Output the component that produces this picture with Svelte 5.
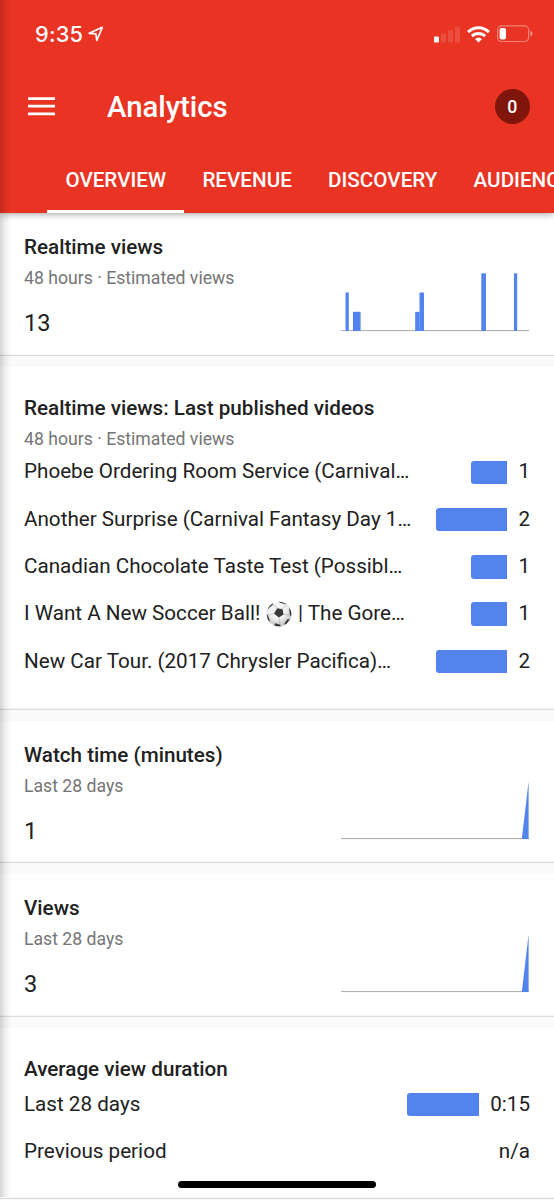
<script lang="ts">
    const tabs = ["Overview", "Revenue", "Discovery", "Audience"];
    let active = "Overview";

    const realtimeBars = [
        { x: 4.5, w: 3.3, h: 38.5 },
        { x: 12, w: 7.6, h: 19.2 },
        { x: 74.2, w: 4.5, h: 19.2 },
        { x: 78.5, w: 4.5, h: 38.5 },
        { x: 140.3, w: 4.7, h: 57.7 },
        { x: 173, w: 3.2, h: 57.7 },
    ];

    const videos = [
        { title: "Phoebe Ordering Room Service (Carnival…", views: 1 },
        { title: "Another Surprise (Carnival Fantasy Day 1…", views: 2 },
        { title: "Canadian Chocolate Taste Test (Possibl…", views: 1 },
        { title: "I Want A New Soccer Ball! ", ball: true, rest: " | The Gore…", views: 1 },
        { title: "New Car Tour. (2017 Chrysler Pacifica)…", views: 2 },
    ];

    const totals = [
        { title: "Watch time (minutes)", value: 1 },
        { title: "Views", value: 3 },
    ];
</script>

<div class="app">
    <header>
        <div class="status">
            <span class="time">9:35</span>
            <svg class="location" width="16" height="16" viewBox="0 0 16 16">
                <path d="M14.3 1.3 L1.2 7.3 L7.9 7.9 L8.8 14.5 Z" fill="none" stroke="#fff" stroke-width="1.7" stroke-linejoin="round" />
            </svg>
            <svg class="signal" width="26" height="17" viewBox="0 0 26 17">
                <rect x="0" y="10.4" width="5" height="6" rx="1.2" fill="#fff" />
                <g fill="#fff" opacity="0.13">
                    <rect x="7" y="7.4" width="5" height="9" rx="1.2" />
                    <rect x="14" y="4.2" width="5" height="12.2" rx="1.2" />
                    <rect x="21" y="0.5" width="5" height="15.9" rx="1.2" />
                </g>
            </svg>
            <svg class="wifi" width="23" height="17" viewBox="0 0 23 17">
                <g fill="none" stroke="#fff" stroke-width="3">
                    <path d="M1.1 6.1 A14.8 14.8 0 0 1 21.9 6.1" />
                    <path d="M4.9 10.1 A9.4 9.4 0 0 1 18.1 10.1" />
                </g>
                <path d="M11.5 16.5 L8 13 A5.2 5.2 0 0 1 15 13 Z" fill="#fff" />
            </svg>
            <svg class="battery" width="36" height="18" viewBox="0 0 36 18">
                <rect x="0.6" y="0.9" width="31" height="15.6" rx="4" fill="none" stroke="#fff" stroke-opacity="0.4" stroke-width="1.2" />
                <rect x="2.6" y="3" width="6.4" height="11.4" rx="2" fill="#fff" />
                <path d="M33.4 5.8 Q35.6 6.6 35.6 8.7 Q35.6 10.8 33.4 11.6 Z" fill="#fff" opacity="0.45" />
            </svg>
        </div>
        <div class="bar">
            <svg class="menu" width="27" height="19" viewBox="0 0 27 19">
                <path d="M0 1.6 H27 M0 9.2 H27 M0 16.8 H27" stroke="#fff" stroke-width="2.8" />
            </svg>
            <h1>Analytics</h1>
            <span class="count">0</span>
        </div>
        <nav>
            {#each tabs as tab}
                <button class:active={tab === active} on:click={() => (active = tab)}>{tab}</button>
            {/each}
        </nav>
    </header>

    <main>
        <section class="card first">
            <div>
                <h2>Realtime views</h2>
                <p class="sub">48 hours · Estimated views</p>
                <p class="value">13</p>
            </div>
            <svg class="chart" width="188" height="59" viewBox="0 0 188 59">
                <rect x="0" y="57" width="188" height="1.1" fill="#b0b0b0" />
                {#each realtimeBars as bar}
                    <rect x={bar.x} y={58 - bar.h} width={bar.w} height={bar.h} fill="#5383ec" />
                {/each}
            </svg>
        </section>

        <section class="card list">
            <h2>Realtime views: Last published videos</h2>
            <p class="sub">48 hours · Estimated views</p>
            <ul class="rows">
                {#each videos as video}
                    <li>
                        <span class="name">{video.title}{#if video.ball}<svg class="ball" width="26" height="26" viewBox="0 0 26 26">
                                    <defs>
                                        <radialGradient id="ball" cx="0.45" cy="0.35" r="0.65">
                                            <stop offset="0.5" stop-color="#f4f4f4" />
                                            <stop offset="1" stop-color="#c0c0c0" />
                                        </radialGradient>
                                        <clipPath id="round"><circle cx="13" cy="13" r="12.3" /></clipPath>
                                    </defs>
                                    <circle cx="13" cy="13" r="12.4" fill="url(#ball)" />
                                    <g clip-path="url(#round)">
                                        <path d="M11.2 7.2 L16.6 8.2 L17.6 13.4 L12.8 16.4 L8 12.6 Z M12 0 L20 0 L20 3.2 L14 1.8 Z M23.2 7 L26 10 L26 17 L23.8 14 Z M21 18.6 L24 18 L20 24 L18.2 23 Z M8 26 L15 26 L14 23.6 L9 22.2 Z M0 13 L1.8 14.2 L3.8 19.4 L3 22 L0 20 Z M0 10 L2.3 7.8 L7.2 3.2 L6 0 L0 5 Z" fill="#3a3a3a" />
                                        <path d="M11.2 7.2 L7.2 3.2 M16.6 8.2 L20 3.2 M17.6 13.4 L23.8 14 M12.8 16.4 L14 23.6 M8 12.6 L1.8 14.2" fill="none" stroke="#aaa" stroke-width="0.6" />
                                    </g>
                                </svg>{video.rest}{/if}</span>
                        <span class="meter" style="width: {video.views * 35.6}px"></span>
                        <span class="amount">{video.views}</span>
                    </li>
                {/each}
            </ul>
        </section>

        {#each totals as total}
            <section class="card">
                <div>
                    <h2>{total.title}</h2>
                    <p class="sub">Last 28 days</p>
                    <p class="value">{total.value}</p>
                </div>
                <svg class="chart" width="188" height="59" viewBox="0 0 188 59">
                    <rect x="0" y="57" width="188" height="1.1" fill="#b0b0b0" />
                    <path d="M180.8 58.1 L187.6 0.5 V58.1 Z" fill="#5383ec" />
                </svg>
            </section>
        {/each}

        <section class="card list last">
            <h2>Average view duration</h2>
            <ul class="rows">
                <li>
                    <span class="name">Last 28 days</span>
                    <span class="meter" style="width: 71.2px"></span>
                    <span class="amount">0:15</span>
                </li>
                <li>
                    <span class="name">Previous period</span>
                    <span class="amount">n/a</span>
                </li>
            </ul>
        </section>
    </main>
    <div class="edge"></div>
    <div class="home"></div>
</div>

<style>
    :global(body) {
        margin: 0;
        background: #fafafa;
    }

    .app {
        position: relative;
        width: 554px;
        height: 1200px;
        overflow: hidden;
        background: #fafafa;
        font-family: Roboto, "Noto Sans", sans-serif;
        font-size: 20.65px;
        color: #212121;
    }

    header {
        position: relative;
        height: 212.7px;
        background: #e93323;
        color: #fff;
        box-shadow: 0 1px 7px rgba(0, 0, 0, 0.38);
    }

    .status {
        display: flex;
        align-items: center;
        height: 68px;
        padding: 0 21px 0 35px;
    }

    .time {
        font-family: Inter, sans-serif;
        font-size: 21.8px;
        font-weight: 500;
        letter-spacing: 0.2px;
    }

    .location {
        margin-left: 5px;
    }

    .signal {
        margin-left: auto;
    }

    .wifi {
        margin: 0 7px 0 7px;
    }

    .bar {
        display: flex;
        align-items: center;
        height: 77px;
        padding: 0 24px 0 28px;
    }

    h1 {
        flex: 1;
        margin: 0 0 0 52px;
        font-size: 29.3px;
        font-weight: 500;
    }

    .count {
        width: 35.5px;
        height: 35.5px;
        border-radius: 50%;
        background: #80150c;
        font-size: 17.7px;
        font-weight: 500;
        line-height: 36px;
        text-align: center;
    }

    nav {
        display: flex;
        height: 67.7px;
        padding-left: 47.3px;
    }

    button {
        flex: none;
        padding: 6px 18.1px 0;
        border: 0;
        border-bottom: 3px solid transparent;
        background: none;
        color: #fff;
        font: 500 20.65px Roboto, sans-serif;
        text-transform: uppercase;
    }

    button.active {
        border-bottom-color: #fff;
    }

    .card {
        display: flex;
        justify-content: space-between;
        box-sizing: border-box;
        height: 153.6px;
        padding: 19px 25px 0 24px;
        border-bottom: 11px solid #fafafa;
        background: #fff;
        box-shadow: inset 0 -1.3px #dcdcdc;
    }

    .first {
        height: 154.2px;
    }

    .list {
        display: block;
        height: 354px;
        padding: 26px 24px 0;
    }

    h2 {
        margin: 0;
        font-size: 20.65px;
        font-weight: 500;
        line-height: 30px;
    }

    p {
        margin: 0;
    }

    .sub {
        margin-top: 4px;
        font-size: 17.65px;
        line-height: 24px;
        color: #757575;
    }

    .value {
        margin-top: 18px;
        font-size: 23.6px;
        line-height: 30px;
    }

    .chart {
        margin-top: 41px;
    }

    .rows {
        display: grid;
        gap: 23.3px;
        margin: 9.5px 0 0;
        padding: 0;
        list-style: none;
    }

    li {
        display: flex;
        align-items: center;
        height: 24px;
    }

    .name,
    .amount {
        height: 24px;
        line-height: 22px;
    }

    .name {
        flex: 1;
        white-space: pre;
    }

    .ball {
        height: 26px;
        margin: -5px 0.5px -3px 1px;
        vertical-align: middle;
    }

    .meter {
        height: 23.6px;
        margin-right: 11.6px;
        border-radius: 3px 0 0 3px;
        background: #5383ec;
    }

    .last {
        height: 182px;
    }

    .last .rows {
        margin-top: 8.5px;
    }

    .edge {
        position: absolute;
        top: 0;
        left: 0;
        width: 11px;
        height: 1197px;
        background: linear-gradient(90deg, rgba(0, 0, 0, 0.17), rgba(0, 0, 0, 0.06) 50%, transparent);
    }

    .home {
        position: absolute;
        left: 178px;
        bottom: 12px;
        width: 198px;
        height: 7.5px;
        border-radius: 4px;
        background: #000;
    }
</style>
